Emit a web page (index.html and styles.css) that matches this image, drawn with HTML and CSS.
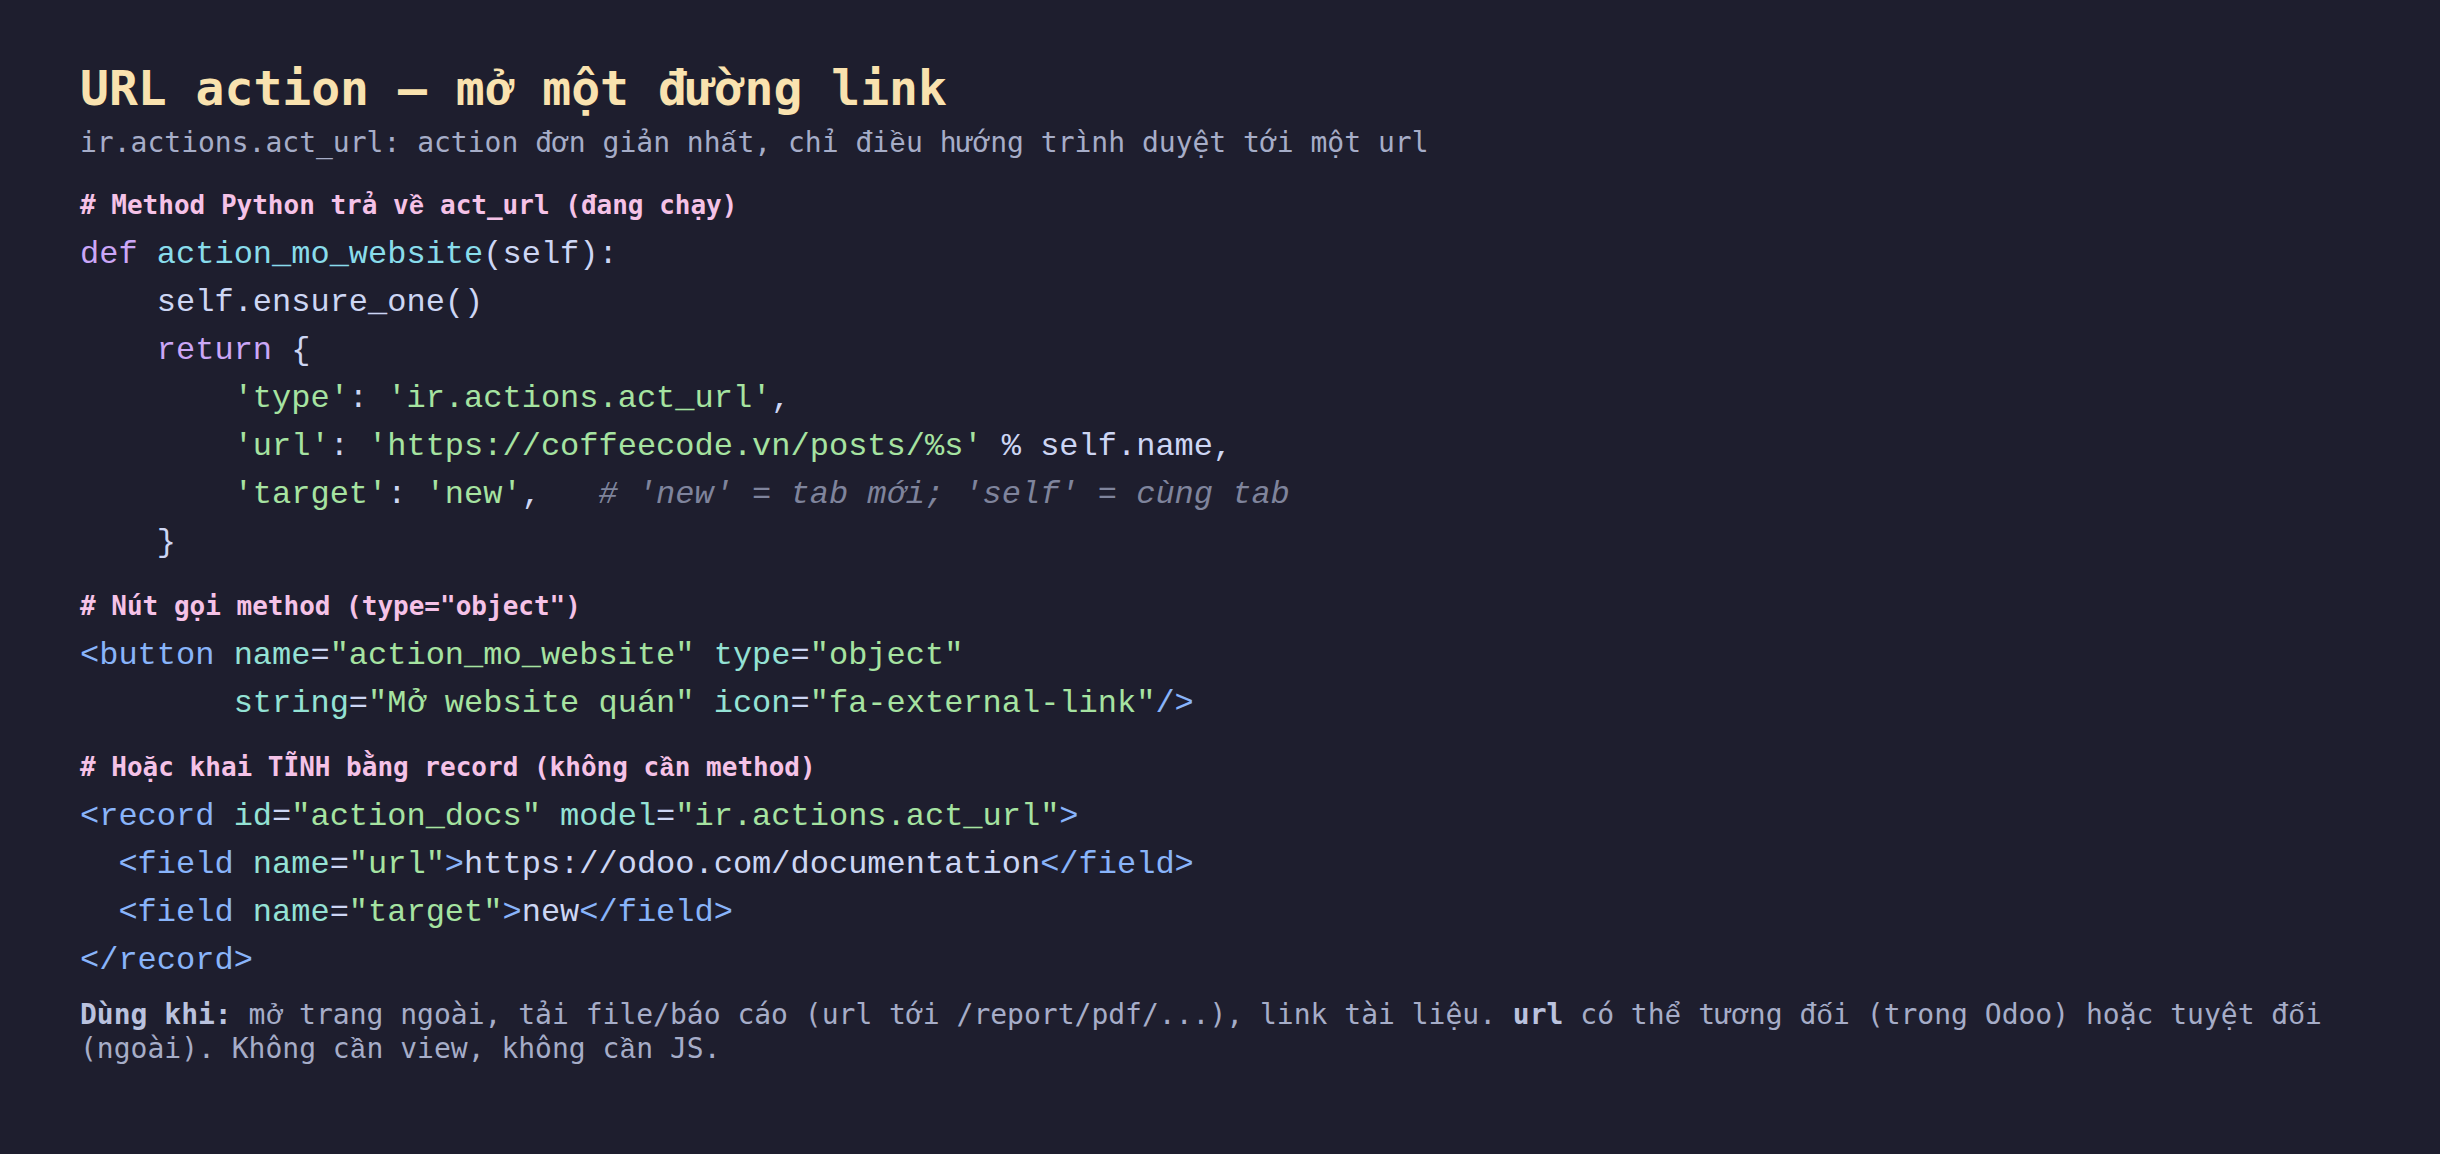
FILE: index.html
```html
<!DOCTYPE html>
<html lang="vi">
<head>
<meta charset="utf-8">
<title>URL action</title>
<link rel="stylesheet" href="styles.css">
</head>
<body>
<main class="page">
  <h1 class="title">URL action — m<span class="vn">ở</span> một đường link</h1>
  <p class="sub">ir.actions.act_url: action đơn giản nh<span class="vn">ấ</span>t, chỉ đi<span class="vn">ề</span>u hướng trình duyệt tới một url</p>

  <div class="cmt"># Method Python trả v<span class="vn">ề</span> act_url (đang chạy)</div>
<pre class="code"><span class="kw">def</span> <span class="fn">action_mo_website</span>(self):
    self.ensure_one()
    <span class="kw">return</span> {
        <span class="str">'type'</span>: <span class="str">'ir.actions.act_url'</span>,
        <span class="str">'url'</span>: <span class="str">'https://coffeecode.vn/posts/%s'</span> % self.name,
        <span class="str">'target'</span>: <span class="str">'new'</span>,   <span class="com"># 'new' = tab mới; 'self' = cùng tab</span>
    }</pre>

  <div class="cmt"># Nút gọi method (type="object")</div>
<pre class="code"><span class="tag">&lt;button</span> <span class="attr">name</span>=<span class="str">"action_mo_website"</span> <span class="attr">type</span>=<span class="str">"object"</span>
        <span class="attr">string</span>=<span class="str">"Mở website quán"</span> <span class="attr">icon</span>=<span class="str">"fa-external-link"</span><span class="tag">/&gt;</span></pre>

  <div class="cmt"># Hoặc khai TĨNH bằng record (không c<span class="vn">ầ</span>n method)</div>
<pre class="code last"><span class="tag">&lt;record</span> <span class="attr">id</span>=<span class="str">"action_docs"</span> <span class="attr">model</span>=<span class="str">"ir.actions.act_url"</span><span class="tag">&gt;</span>
  <span class="tag">&lt;field</span> <span class="attr">name</span>=<span class="str">"url"</span><span class="tag">&gt;</span>https://odoo.com/documentation<span class="tag">&lt;/field&gt;</span>
  <span class="tag">&lt;field</span> <span class="attr">name</span>=<span class="str">"target"</span><span class="tag">&gt;</span>new<span class="tag">&lt;/field&gt;</span>
<span class="tag">&lt;/record&gt;</span></pre>

  <p class="note"><b>Dùng khi:</b> m<span class="vn">ở</span> trang ngoài, tải file/báo cáo (url tới /report/pdf/...), link tài liệu. <b>url</b> có th<span class="vn">ể</span> tương đ<span class="vn">ố</span>i (trong Odoo) hoặc tuyệt đ<span class="vn">ố</span>i (ngoài). Không c<span class="vn">ầ</span>n view, không c<span class="vn">ầ</span>n JS.</p>
</main>
</body>
</html>
```

FILE: styles.css
```css
html, body {
  margin: 0;
  padding: 0;
  background: #1e1e2e;
}

body {
  min-height: 1154px;
  font-family: "DejaVu Sans Mono", monospace;
  color: #cdd6f4;
}

.page {
  padding: 60px 80px 40px;
}

.title {
  margin: 0;
  font-size: 48px;
  line-height: 57.6px;
  font-weight: bold;
  color: #f9e2af;
}

.sub {
  margin: 5px 0 24px;
  font-size: 28px;
  line-height: 39px;
  color: #a6adc8;
}

.cmt {
  margin: 0 0 6px;
  font-size: 26px;
  line-height: 39px;
  font-weight: bold;
  color: #f5c2e7;
}

.code {
  margin: 0 0 20px;
  font-family: "Liberation Mono", monospace;
  font-size: 32px;
  line-height: 48px;
  color: #cdd6f4;
  white-space: pre;
}

.code.last {
  margin-bottom: 13px;
}

.kw { color: #cba6f7; }
.fn { color: #89dceb; }
.str { color: #a6e3a1; }
.com { color: #7f849c; font-style: italic; }
.tag { color: #89b4fa; }
.attr { color: #94e2d5; }

.vn {
  font-family: "Liberation Mono", monospace;
  line-height: 0;
}

.note {
  margin: 0;
  font-size: 28px;
  line-height: 34px;
  color: #a6adc8;
}

.note b {
  color: #bac2de;
}
```
